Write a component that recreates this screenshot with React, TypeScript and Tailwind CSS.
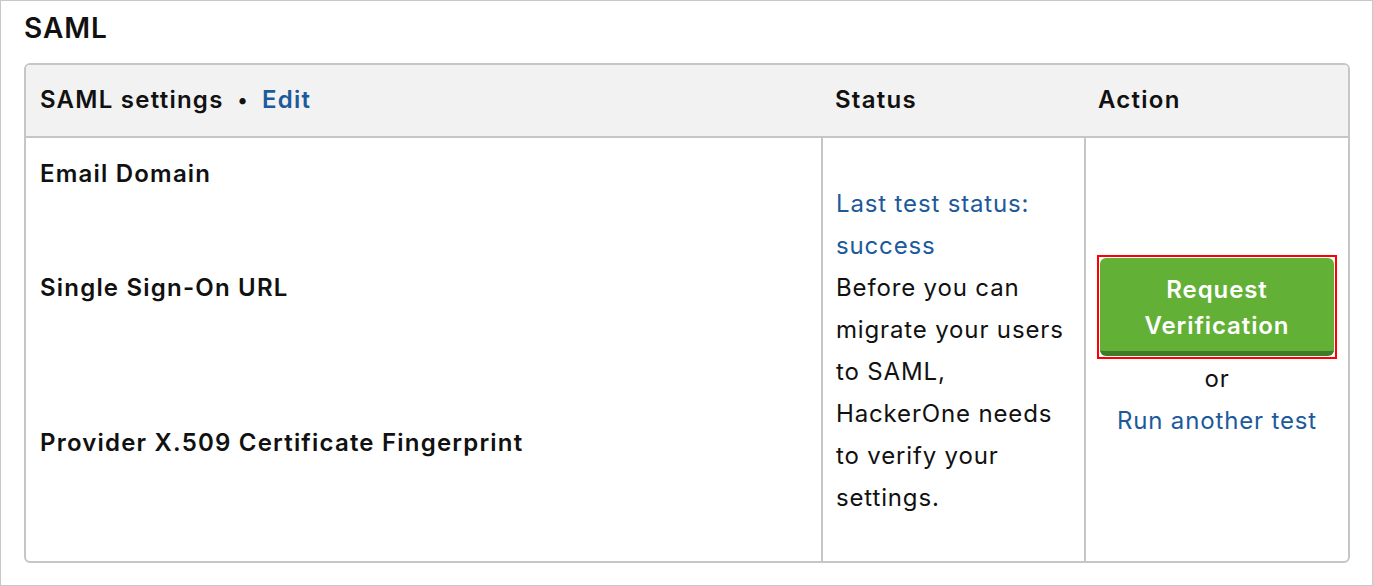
import React from "react";

export default function App() {
  const font = { fontFamily: "Inter, 'Noto Sans', 'Liberation Sans', sans-serif" };
  return (
    <div
      className="w-[1373px] h-[586px] bg-white border border-[#c8c8c8] box-border px-[23px] text-[#111]"
      style={font}
    >
      <h1 className="pt-[9px] leading-[36px] text-[28px] font-semibold mb-[17px] tracking-[1px]">SAML</h1>
      <div className="w-[1326px] border-2 border-[#c6c6c6] rounded-[6px] overflow-hidden">
        <div className="grid grid-cols-[795px_265px_1fr] h-[73px] bg-[#f2f2f2] border-b-2 border-[#c6c6c6] items-center text-[24px] font-semibold tracking-[1.25px]">
          <div className="pl-[14px] flex items-center -mt-[2px]">
            <span>SAML settings</span>
            <span className="ml-[14px] mr-[13px] text-[20px]">•</span>
            <span className="text-[#1c5a9c]">Edit</span>
          </div>
          <div className="pl-[14px] -mt-[2px]">Status</div>
          <div className="pl-[12px] -mt-[2px]">Action</div>
        </div>
        <div className="grid grid-cols-[795px_265px_1fr] h-[423px] text-[24px] leading-[42px] tracking-[0.85px]">
          <div className="pl-[14px] pt-[15px] font-semibold flex flex-col tracking-[1.2px]">
            <div>Email Domain</div>
            <div className="mt-[72px]">Single Sign-On URL</div>
            <div className="mt-[113px]">Provider X.509 Certificate Fingerprint</div>
          </div>
          <div className="border-l-2 border-r-2 border-[#c6c6c6] pl-[13px] pr-[14px] flex flex-col justify-center pt-[2px]">
            <div className="text-[#1c5a9c]">Last test status: success</div>
            <div>Before you can migrate your users to SAML, HackerOne needs to verify your settings.</div>
          </div>
          <div className="flex flex-col items-center justify-center pb-[4px]">
            <div className="border-2 border-[#ff0000] p-[1px] mt-[1px]">
              <button className="w-[234px] h-[98px] bg-[#62b036] border-b-[5px] border-[#3f7a27] rounded-[6px] text-white font-semibold text-[24px] leading-[36px] pt-[8px] tracking-[0.9px]">
                Request
                <br />
                Verification
              </button>
            </div>
            <div className="-mt-[1px]">or</div>
            <div className="text-[#1c5a9c]">Run another test</div>
          </div>
        </div>
      </div>
    </div>
  );
}
